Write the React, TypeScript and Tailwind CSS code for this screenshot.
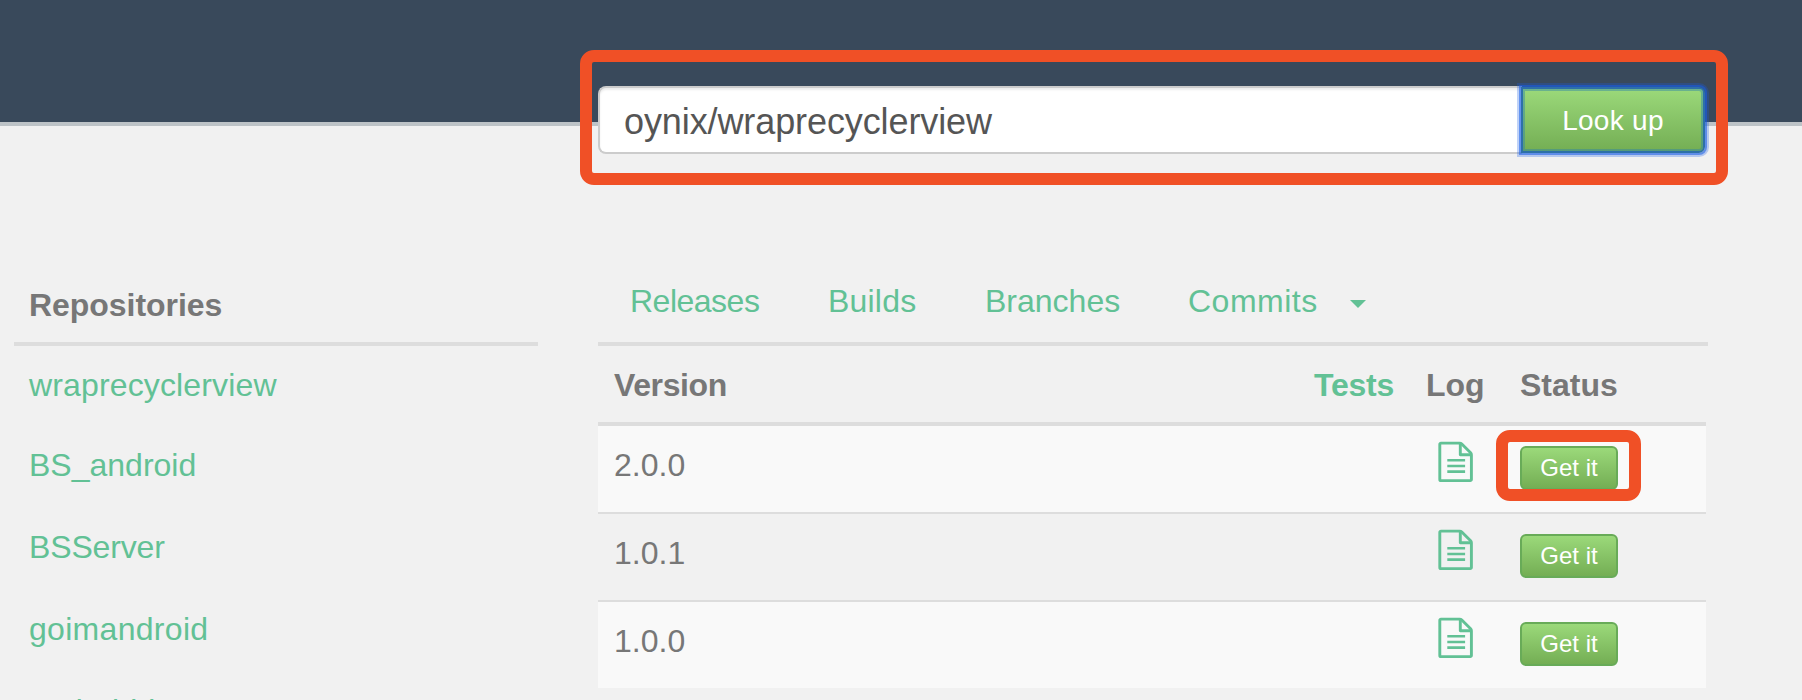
const repos = [
  { name: 'wraprecyclerview', cls: 'h-[80px] tracking-[0.14px]' },
  { name: 'BS_android', cls: 'h-[82px]' },
  { name: 'BSServer', cls: 'h-[82px] tracking-[-0.15px]' },
  { name: 'goimandroid', cls: 'h-[82px] tracking-[0.3px]' },
  { name: 'androiddemo', cls: 'h-[82px] tracking-[0.25px]' },
];

const versions = ['2.0.0', '1.0.1', '1.0.0'];

function LogIcon() {
  return (
    <svg width="36" height="42" viewBox="0 0 36 42" fill="none" stroke="#62c195" strokeWidth="2.9" strokeLinejoin="round">
      <path d="M4 2.1h18.6c.8 0 1.6.3 2.2.9l8.800 8.8c.5.5.8 1.2.8 2v24.6a1.2 1.2 0 0 1-1.2 1.2H4a1.2 1.2 0 0 1-1.2-1.2V3.3A1.2 1.2 0 0 1 4 2.1z" />
      <path d="M23.3 2.5v11.3h11" />
      <path d="M10.300 19.3h17.8M10.3 25h17.8M10.3 30.6h17.8" strokeWidth="2.6" />
    </svg>
  );
}

export default function App() {
  return (
    <div className="relative flex h-[700px] w-[1802px] flex-col overflow-hidden bg-[#f1f1f1] font-['Liberation_Sans',Arial,sans-serif] text-[32px] leading-[40px] text-[#777]">
      <header className="h-[126px] shrink-0 border-b-4 border-[#bdc3c7] bg-[#39495b] pl-[598px] pt-[86px]">
        <div className="flex h-[68px] w-[1108px]">
          <input
            className="h-[68px] w-[924px] shrink-0 rounded-l-[8px] border-2 border-r-0 border-[#ccc] bg-white pl-[24px] pt-[4px] text-[36px] tracking-[-0.1px] text-[#555] shadow-[inset_0_2px_2px_rgba(0,0,0,0.075)] outline-none"
            defaultValue="oynix/wraprecyclerview"
          />
          <button className="relative -ml-px mt-px h-[66px] w-[184px] shrink-0 rounded-r-[6px] border-2 border-[#2e70a8] bg-linear-to-b from-[#9bd97a] to-[#74ae54] pt-[2px] text-[28px] tracking-[0.3px] text-white shadow-[0_0_0_2px_rgba(24,92,230,0.55),0_0_0_4px_rgba(24,92,230,0.28),inset_0_0_0_2px_rgba(46,130,168,0.45)]">
            Look up
          </button>
        </div>
      </header>

      <main className="flex pl-[14px] pt-[136px]">
        <aside className="w-[524px]">
          <h2 className="h-[84px] border-b-4 border-[#ddd] pl-[15px] pt-[23px] font-bold tracking-[-0.05px]">Repositories</h2>
          <ul className="pl-[15px] pt-[19px]">
            {repos.map((r) => (
              <li key={r.name} className={r.cls}>
                <a className="text-[#62c195]">{r.name}</a>
              </li>
            ))}
          </ul>
        </aside>

        <section className="ml-[60px] w-[1110px]">
          <nav className="flex h-[84px] border-b-4 border-[#ddd] pl-[32px] pt-[19px] text-[#62c195]">
            <a className="w-[198px] tracking-[-0.5px]">Releases</a>
            <a className="w-[157px] tracking-[0.2px]">Builds</a>
            <a className="w-[203px]">Branches</a>
            <a className="w-[162px] tracking-[0.5px]">Commits</a>
            <svg className="mt-[19px]" width="16" height="8" viewBox="0 0 16 8" fill="#62c195">
              <path d="M0 0h16L8 8z" />
            </svg>
          </nav>
          <div className="w-[1108px]">
            <div className="flex h-[80px] border-b-4 border-[#ddd] pl-[16px] pt-[19px] font-bold">
              <span className="w-[700px] tracking-[-0.4px]">Version</span>
              <span className="w-[112px] tracking-[-0.25px] text-[#62c195]">Tests</span>
              <span className="w-[94px]">Log</span>
              <span>Status</span>
            </div>
            {versions.map((v, i) => (
              <div
                key={v}
                className={
                  'flex pl-[16px] ' +
                  (i > 0 ? 'h-[88px] border-t-2 border-[#ddd] ' : 'h-[86px] ') +
                  (i % 2 === 0 ? 'bg-[#f9f9f9]' : '')
                }
              >
                <span className="w-[823px] pt-[19px]">{v}</span>
                <span className="w-[83px] pt-[15px]">
                  <LogIcon />
                </span>
                <button className="mt-[20px] h-[44px] w-[98px] rounded-[6px] border-2 border-[#68ab58] bg-linear-to-b from-[#9bd97a] to-[#74ae54] text-[24px] leading-[38px] text-white">
                  Get it
                </button>
              </div>
            ))}
          </div>
        </section>
      </main>

      <div className="pointer-events-none absolute left-[580px] top-[50px] h-[135px] w-[1148px] rounded-[14px] border-12 border-[#f05026]" />
      <div className="pointer-events-none absolute left-[1496px] top-[430px] h-[71px] w-[145px] rounded-[14px] border-12 border-[#f05026]" />
    </div>
  );
}
